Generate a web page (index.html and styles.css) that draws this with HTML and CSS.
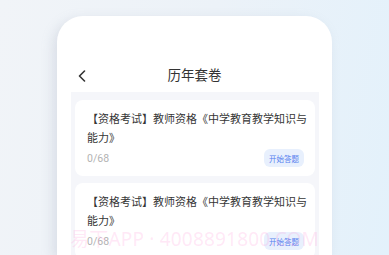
FILE: index.html
```html
<!DOCTYPE html>
<html lang="zh">
<head>
<meta charset="utf-8">
<link rel="stylesheet" href="styles.css">
</head>
<body>
<div class="stage">
  <div class="phone">
    <div class="header">
      <svg class="back" width="10" height="12" viewBox="0 0 10 12"><path d="M7.5 1 L2.5 6 L7.5 11" fill="none" stroke="#333" stroke-width="1.6" stroke-linecap="round" stroke-linejoin="round"/></svg>
      <div class="title">历年套卷</div>
    </div>
    <div class="content">
      <div class="card">
        <div class="name">【资格考试】教师资格《中学教育教学知识与能力》</div>
        <div class="foot">
          <span class="count">0/68</span>
          <span class="btn">开始答题</span>
        </div>
      </div>
      <div class="card">
        <div class="name">【资格考试】教师资格《中学教育教学知识与能力》</div>
        <div class="foot">
          <span class="count">0/68</span>
          <span class="btn">开始答题</span>
        </div>
      </div>
    </div>
    <div class="watermark">易下APP · 4008891800.COM</div>
  </div>
</div>
</body>
</html>
```
FILE: styles.css
```css
html, body {
  margin: 0;
  padding: 0;
  width: 389px;
  height: 255px;
  overflow: hidden;
}
body {
  background: linear-gradient(100deg, #f1f4f8 0%, #ecf2f8 50%, #e3f1fb 100%);
  font-family: "Noto Sans CJK SC", "Noto Sans", sans-serif;
}
.stage {
  padding: 16px 0 0 57px;
}
.phone {
  position: relative;
  width: 275px;
  height: 239px;
  overflow: hidden;
  background: #ffffff;
  border-radius: 26px 26px 0 0;
  box-shadow: -4px 4px 12px rgba(150, 160, 180, 0.25);
  display: flex;
  flex-direction: column;
}
.header {
  position: relative;
  height: 76px;
  flex: none;
  display: flex;
  align-items: flex-end;
  justify-content: center;
}
.back {
  position: absolute;
  left: 20px;
  top: 54px;
}
.title {
  font-size: 13.5px;
  color: #333;
  line-height: 20px;
  margin-bottom: 8px;
}
.content {
  flex: 1;
  min-height: 0;
  margin: 0 13px 0 14px;
  background: #f5f6fa;
  padding: 8px 4px 0;
  display: flex;
  flex-direction: column;
  gap: 7px;
}
.card {
  flex: none;
  background: #fff;
  border-radius: 8px;
  padding: 9px 8px 9px 12px;
}
.name {
  font-size: 11px;
  line-height: 19px;
  color: #363636;
}
.foot {
  display: flex;
  justify-content: space-between;
  align-items: center;
  margin-top: 2px;
  padding-right: 3px;
}
.count {
  font-size: 10.5px;
  color: #b3b3b3;
  font-family: "Roboto", "Noto Sans", sans-serif;
}
.btn {
  width: 40px;
  height: 18px;
  border-radius: 6px;
  background: #e8f0fd;
  color: #5680ef;
  font-size: 7.5px;
  display: flex;
  align-items: center;
  justify-content: center;
}
.watermark {
  position: absolute;
  left: 13px;
  top: 208px;
  font-size: 19px;
  color: rgba(255, 150, 215, 0.22);
  font-family: "Noto Sans", "Noto Sans CJK SC", sans-serif;
  white-space: nowrap;
  letter-spacing: 0.2px;
}
```
